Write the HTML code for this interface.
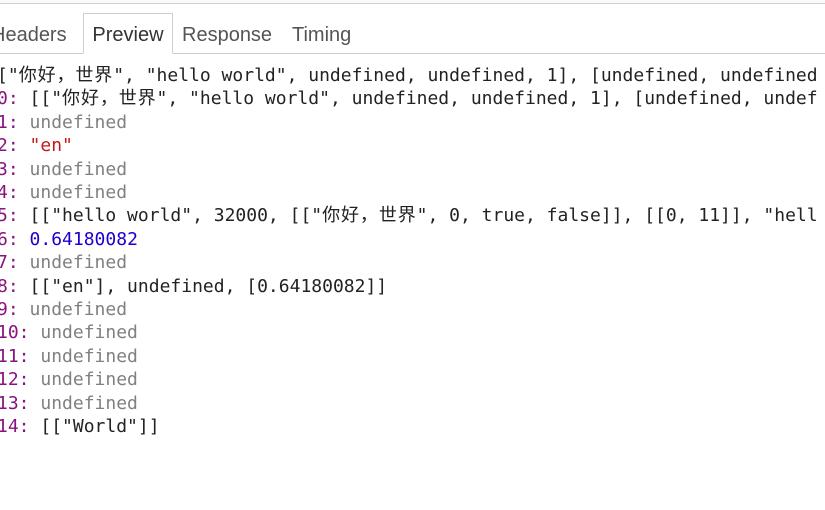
<!DOCTYPE html>
<html><head><meta charset="utf-8"><style>
body{margin:0;width:825px;height:510px;overflow:hidden;background:#fff;position:relative}
.top{position:absolute;left:0;top:0;width:825px;height:3px;border-bottom:1px solid #d0d0d0;background:#fafafa}
.tabs{position:absolute;left:0;top:14px;width:825px;height:39px;border-bottom:1px solid #cfcfcf;font-family:"Liberation Sans",sans-serif;font-size:20px;color:#555}
.tab{position:absolute;top:0;height:39px;line-height:43px}
.sel{border:1px solid #cfcfcf;border-bottom:1px solid #fff;background:#fff;color:#333;height:39px;top:-1px}
.c{position:absolute;left:-3px;top:64px;font-family:"DejaVu Sans Mono","Noto Sans CJK SC",monospace;font-size:18px;line-height:23.4px;white-space:pre;color:#222}
.k{color:#881280}.u{color:#808080}.s{color:#c41a16}.n{color:#1c00cf}
.z{letter-spacing:0.9px}
</style></head><body>
<div class="top"></div>
<div class="tabs">
<div class="tab" style="left:-9px">Headers</div>
<div class="tab sel" style="left:83px;width:88px;text-align:center">Preview</div>
<div class="tab" style="left:182px">Response</div>
<div class="tab" style="left:292px">Timing</div>
</div>
<div class="c">[&quot;<span class="z">你好，世界</span>", "hello world", undefined, undefined, 1], [undefined, undefined
<span class="k">0:</span> [["<span class="z">你好，世界</span>", "hello world", undefined, undefined, 1], [undefined, undef
<span class="k">1:</span> <span class="u">undefined</span>
<span class="k">2:</span> <span class="s">"en"</span>
<span class="k">3:</span> <span class="u">undefined</span>
<span class="k">4:</span> <span class="u">undefined</span>
<span class="k">5:</span> [["hello world", 32000, [["<span class="z">你好，世界</span>", 0, true, false]], [[0, 11]], "hell
<span class="k">6:</span> <span class="n">0.64180082</span>
<span class="k">7:</span> <span class="u">undefined</span>
<span class="k">8:</span> [["en"], undefined, [0.64180082]]
<span class="k">9:</span> <span class="u">undefined</span>
<span class="k">10:</span> <span class="u">undefined</span>
<span class="k">11:</span> <span class="u">undefined</span>
<span class="k">12:</span> <span class="u">undefined</span>
<span class="k">13:</span> <span class="u">undefined</span>
<span class="k">14:</span> [["World"]]</div>
</body></html>
